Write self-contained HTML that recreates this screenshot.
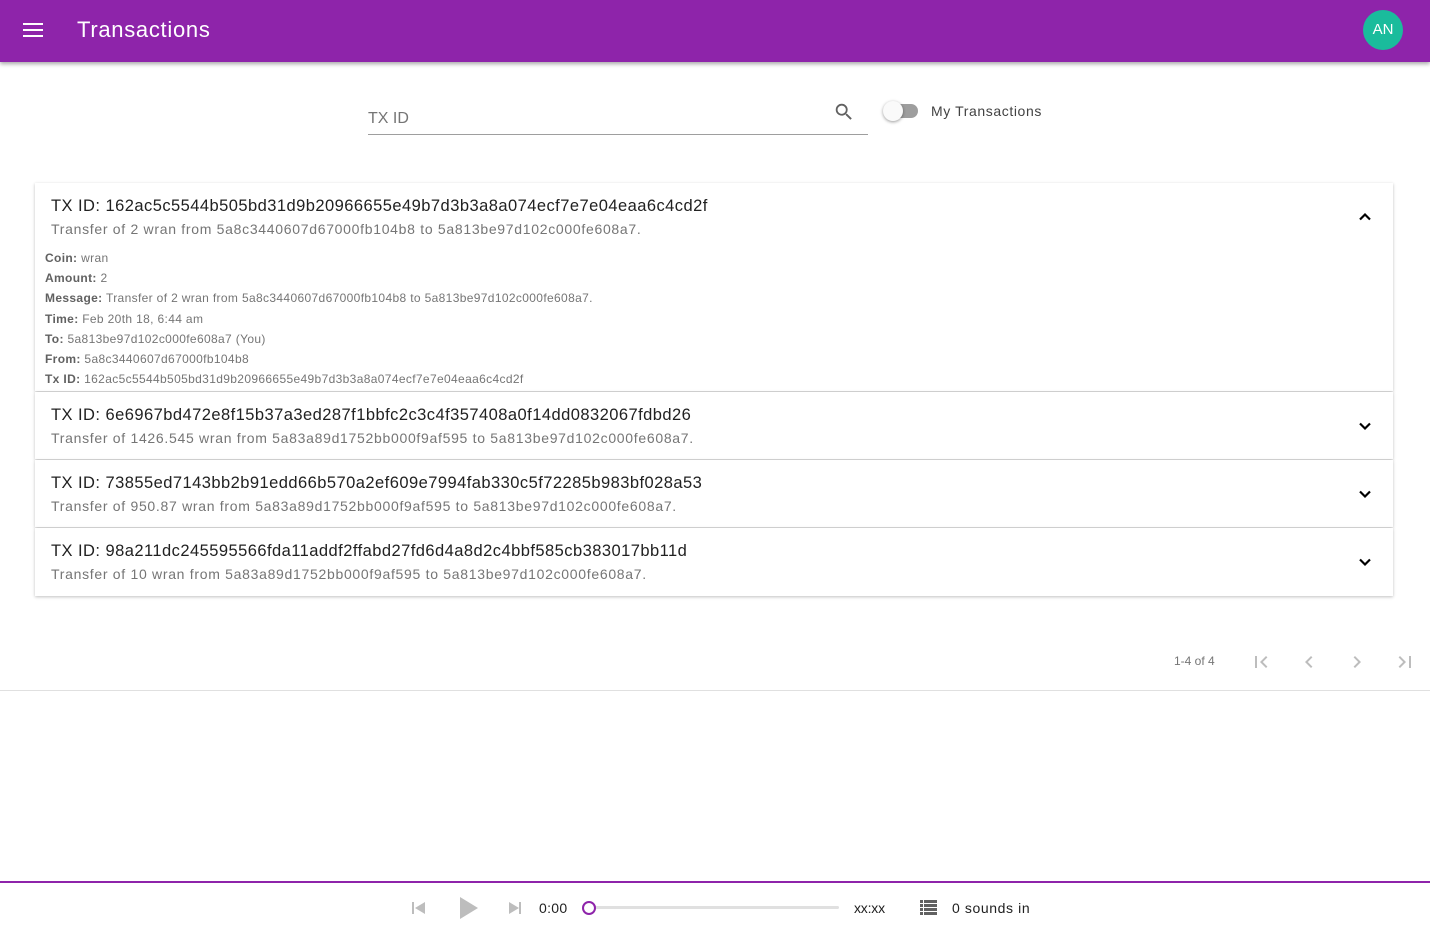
<!DOCTYPE html>
<html><head><meta charset="utf-8"><style>
*{box-sizing:border-box;margin:0;padding:0}
body{width:1430px;height:934px;overflow:hidden;background:#fff;font-family:"Liberation Sans",sans-serif;color:#212121;position:relative}
.bar{position:absolute;left:0;top:0;width:1430px;height:62px;background:#8e24aa;box-shadow:0 2px 4px rgba(0,0,0,.35)}
.bar .t{position:absolute;left:77px;top:17px;color:#fff;font-size:22px;letter-spacing:.7px}
.av{position:absolute;left:1363px;top:10px;width:40px;height:40px;border-radius:50%;background:#1abc9c;color:#fff;font-size:15px;line-height:40px;text-align:center}
.search{position:absolute;left:368px;top:100px;width:500px;height:35px;border-bottom:1px solid #9e9e9e}
.search span{position:absolute;left:0;top:10px;font-size:16px;color:#757575}
.card{position:absolute;left:35px;width:1358px;background:#fff;box-shadow:0 1px 3px rgba(0,0,0,.25)}
.h{position:absolute;left:16px;font-size:16.5px;letter-spacing:.45px;color:#212121}
.s{position:absolute;left:16px;font-size:14px;letter-spacing:.7px;color:#757575}
.chev{position:absolute;left:1320px}
.d{position:absolute;left:10px;font-size:12px;color:#757575;letter-spacing:.35px}
.d b{color:#616161}
.pg{position:absolute;top:654px;font-size:12px;color:#757575}
</style></head><body>
<div class="bar">
<svg style="position:absolute;left:23px;top:23px" width="20" height="14"><rect y="0" width="20" height="2" fill="#fff"/><rect y="6" width="20" height="2" fill="#fff"/><rect y="12" width="20" height="2" fill="#fff"/></svg>
<div class="t">Transactions</div>
<div class="av">AN</div>
</div>
<div class="search"><span>TX ID</span>
<svg style="position:absolute;left:465px;top:1px" width="22" height="22" viewBox="0 0 24 24"><path d="M15.5 14h-.79l-.28-.27A6.47 6.47 0 0 0 16 9.5 6.5 6.5 0 1 0 9.5 16c1.61 0 3.09-.59 4.23-1.57l.27.28v.79l5 4.99L20.49 19l-4.99-5zm-6 0C7.01 14 5 11.99 5 9.5S7.01 5 9.5 5 14 7.01 14 9.5 11.99 14 9.5 14z" fill="#616161"/></svg>
</div>
<div style="position:absolute;left:886px;top:104px;width:32px;height:14px;border-radius:7px;background:#9e9e9e"></div>
<div style="position:absolute;left:883px;top:101px;width:20px;height:20px;border-radius:50%;background:#fafafa;box-shadow:0 1px 3px rgba(0,0,0,.4)"></div>
<div style="position:absolute;left:931px;top:103px;font-size:14px;letter-spacing:.6px;color:#424242">My Transactions</div>

<div class="card" style="top:183px;height:208px">
<div class="h" style="top:14px">TX ID: 162ac5c5544b505bd31d9b20966655e49b7d3b3a8a074ecf7e7e04eaa6c4cd2f</div>
<div class="s" style="top:38px">Transfer of 2 wran from 5a8c3440607d67000fb104b8 to 5a813be97d102c000fe608a7.</div>
<svg class="chev" style="top:24px" width="20" height="20" viewBox="0 0 24 24"><path d="M6 15l6-6 6 6" fill="none" stroke="#000" stroke-width="2.6"/></svg>
<div class="d" style="top:68px"><b>Coin:</b> wran</div>
<div class="d" style="top:88px"><b>Amount:</b> 2</div>
<div class="d" style="top:108px"><b>Message:</b> Transfer of 2 wran from 5a8c3440607d67000fb104b8 to 5a813be97d102c000fe608a7.</div>
<div class="d" style="top:129px"><b>Time:</b> Feb 20th 18, 6:44 am</div>
<div class="d" style="top:149px"><b>To:</b> 5a813be97d102c000fe608a7 (You)</div>
<div class="d" style="top:169px"><b>From:</b> 5a8c3440607d67000fb104b8</div>
<div class="d" style="top:189px"><b>Tx ID:</b> 162ac5c5544b505bd31d9b20966655e49b7d3b3a8a074ecf7e7e04eaa6c4cd2f</div>
</div>
<div class="card" style="top:392px;height:67px">
<div class="h" style="top:14px">TX ID: 6e6967bd472e8f15b37a3ed287f1bbfc2c3c4f357408a0f14dd0832067fdbd26</div>
<div class="s" style="top:38px">Transfer of 1426.545 wran from 5a83a89d1752bb000f9af595 to 5a813be97d102c000fe608a7.</div>
<svg class="chev" style="top:24px" width="20" height="20" viewBox="0 0 24 24"><path d="M6 9l6 6 6-6" fill="none" stroke="#000" stroke-width="2.6"/></svg>
</div>
<div class="card" style="top:460px;height:67px">
<div class="h" style="top:14px">TX ID: 73855ed7143bb2b91edd66b570a2ef609e7994fab330c5f72285b983bf028a53</div>
<div class="s" style="top:38px">Transfer of 950.87 wran from 5a83a89d1752bb000f9af595 to 5a813be97d102c000fe608a7.</div>
<svg class="chev" style="top:24px" width="20" height="20" viewBox="0 0 24 24"><path d="M6 9l6 6 6-6" fill="none" stroke="#000" stroke-width="2.6"/></svg>
</div>
<div class="card" style="top:528px;height:68px">
<div class="h" style="top:14px">TX ID: 98a211dc245595566fda11addf2ffabd27fd6d4a8d2c4bbf585cb383017bb11d</div>
<div class="s" style="top:38px">Transfer of 10 wran from 5a83a89d1752bb000f9af595 to 5a813be97d102c000fe608a7.</div>
<svg class="chev" style="top:24px" width="20" height="20" viewBox="0 0 24 24"><path d="M6 9l6 6 6-6" fill="none" stroke="#000" stroke-width="2.6"/></svg>
</div>

<div class="pg" style="left:1174px">1-4 of 4</div>
<svg style="position:absolute;left:1249px;top:650px" width="24" height="24" viewBox="0 0 24 24"><path d="M18.41 16.59 13.82 12l4.59-4.59L17 6l-6 6 6 6zM6 6h2v12H6z" fill="#bdbdbd"/></svg>
<svg style="position:absolute;left:1297px;top:650px" width="24" height="24" viewBox="0 0 24 24"><path d="M15.41 7.41 14 6l-6 6 6 6 1.41-1.41L10.83 12z" fill="#bdbdbd"/></svg>
<svg style="position:absolute;left:1345px;top:650px" width="24" height="24" viewBox="0 0 24 24"><path d="M10 6 8.59 7.41 13.17 12l-4.58 4.59L10 18l6-6z" fill="#bdbdbd"/></svg>
<svg style="position:absolute;left:1393px;top:650px" width="24" height="24" viewBox="0 0 24 24"><path d="M5.59 7.41 10.18 12l-4.59 4.59L7 18l6-6-6-6zM16 6h2v12h-2z" fill="#bdbdbd"/></svg>
<div style="position:absolute;left:0;top:690px;width:1430px;height:1px;background:#e0e0e0"></div>

<div style="position:absolute;left:0;top:881px;width:1430px;height:2px;background:#8e24aa"></div>
<svg style="position:absolute;left:412px;top:901px" width="14" height="14"><rect x="0" y="1" width="2" height="12" fill="#bdbdbd"/><path d="M13 1v12L3 7z" fill="#bdbdbd"/></svg>
<svg style="position:absolute;left:458px;top:896px" width="22" height="24"><path d="M2 1v22l18-11z" fill="#bdbdbd"/></svg>
<svg style="position:absolute;left:508px;top:901px" width="14" height="14"><path d="M1 1v12l10-6z" fill="#bdbdbd"/><rect x="11" y="1" width="2" height="12" fill="#bdbdbd"/></svg>
<div style="position:absolute;left:539px;top:900px;font-size:14px;color:#212121;letter-spacing:.3px">0:00</div>
<div style="position:absolute;left:589px;top:906px;width:250px;height:3px;background:#e0e0e0;border-radius:2px"></div>
<div style="position:absolute;left:582px;top:901px;width:14px;height:14px;border-radius:50%;border:2px solid #8e24aa;background:#fff"></div>
<div style="position:absolute;left:854px;top:900px;font-size:14px;color:#212121;letter-spacing:-.2px">xx:xx</div>
<svg style="position:absolute;left:920px;top:900px" width="17" height="15"><g fill="#616161"><rect x="0" y="0" width="3" height="3"/><rect x="4" y="0" width="13" height="3"/><rect x="0" y="4" width="3" height="3"/><rect x="4" y="4" width="13" height="3"/><rect x="0" y="8" width="3" height="3"/><rect x="4" y="8" width="13" height="3"/><rect x="0" y="12" width="3" height="3"/><rect x="4" y="12" width="13" height="3"/></g></svg>
<div style="position:absolute;left:952px;top:900px;font-size:14px;color:#212121;letter-spacing:.6px">0 sounds in</div>
</body></html>
